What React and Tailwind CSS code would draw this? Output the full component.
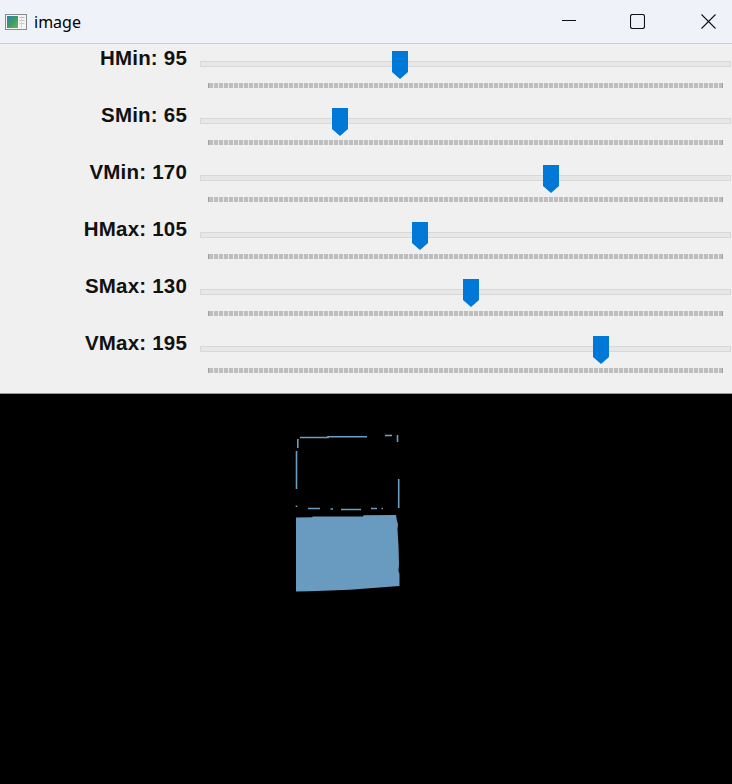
const sliders = [
  { label: 'HMin', value: 95 },
  { label: 'SMin', value: 65 },
  { label: 'VMin', value: 170 },
  { label: 'HMax', value: 105 },
  { label: 'SMax', value: 130 },
  { label: 'VMax', value: 195 },
];

function AppIcon() {
  return (
    <svg width="22" height="16" viewBox="0 0 22 16">
      <defs>
        <linearGradient id="pic" x1="0" y1="0" x2="1" y2="1">
          <stop offset="0" stopColor="#2f7fa8" />
          <stop offset="0.5" stopColor="#3c9a6a" />
          <stop offset="1" stopColor="#6cb84a" />
        </linearGradient>
      </defs>
      <rect x="0.5" y="0.5" width="21" height="15" fill="#f4f4f4" stroke="#8a8a8a" />
      <rect x="2" y="2" width="11" height="12" fill="url(#pic)" />
      <rect x="14.5" y="3" width="5" height="1" fill="#b8b8b8" />
      <rect x="14.5" y="6" width="5" height="1" fill="#c8c8c8" />
      <rect x="14.5" y="9" width="5" height="1" fill="#c8c8c8" />
      <rect x="16" y="2" width="1" height="12" fill="#d8d8d8" />
    </svg>
  );
}

function TitleBar() {
  return (
    <div className="flex h-[44px] items-center border-b border-[#c9ccd1] bg-[#eff3f9]">
      <div className="ml-[5px] mt-[1px]">
        <AppIcon />
      </div>
      <span className="ml-[7px] text-[16px] leading-none text-black" style={{ fontFamily: '"Noto Sans", "Open Sans", sans-serif' }}>
        image
      </span>
      <div className="ml-auto flex items-center pr-[16px]">
        <svg width="14" height="14" viewBox="0 0 14 14" className="mt-[-1px]">
          <path d="M0 6.5h14" stroke="#111" strokeWidth="1" />
        </svg>
        <svg width="15" height="15" viewBox="0 0 15 15" className="ml-[54px]">
          <rect x="0.5" y="0.5" width="14" height="14" rx="2" fill="none" stroke="#111" strokeWidth="1.1" />
        </svg>
        <svg width="15" height="15" viewBox="0 0 15 15" className="ml-[56px]">
          <path d="M0.5 0.5L14.5 14.5M14.5 0.5L0.5 14.5" stroke="#111" strokeWidth="1.1" />
        </svg>
      </div>
    </div>
  );
}

function Thumb({ value }) {
  const left = 1 + value * 2.012;
  return (
    <svg
      width="16"
      height="28"
      viewBox="0 0 16 28"
      className="absolute top-[7px]"
      style={{ left }}
    >
      <path d="M0 0H16V21L8 28L0 21Z" fill="#0078d7" />
    </svg>
  );
}

function SliderRow({ label, value }) {
  return (
    <div className="flex h-[57px]">
      <div
        className="w-[200px] pr-[13px] pt-[4px] text-right text-[20.5px] font-bold leading-[20px] tracking-[0.2px] text-[#111]"
        style={{ fontFamily: '"Liberation Sans", Arial, sans-serif' }}
      >
        {label}: {value}
      </div>
      <div className="relative flex-1">
        <div className="mt-[17px] h-[6px] w-[531px] border border-[#d8d8d8] bg-[#e7e7e7]" />
        <div className="ml-[8px] mt-[16px] flex h-[5px] w-[515px] items-stretch">
          <div className="w-[1px] bg-[#a0a0a0]" />
          <div className="flex-1 bg-[repeating-linear-gradient(90deg,#bebebe_0px,#bebebe_4px,#ebebeb_4px,#ebebeb_5px)]" />
          <div className="w-[1px] bg-[#a0a0a0]" />
        </div>
        <Thumb value={value} />
      </div>
    </div>
  );
}

function Mask() {
  return (
    <svg width="732" height="390" viewBox="0 393 732 390" className="block">
      <g stroke="#6a9ec2" strokeWidth="1.6" fill="none">
        <path d="M300 436.5H328V435.8H367" />
        <path d="M385 434.5H392" />
        <path d="M397.5 434V441" />
        <path d="M297.8 438V447" />
        <path d="M296.5 450V488" />
        <path d="M398.7 478V507" />
        <path d="M308 507.5H320M330.5 508H333M341 508.5H361M371 507.5H377M381.5 507.5H383" />
        <path d="M296.5 504.5V506" />
      </g>
      <path
        d="M296 516.5L312 516.3L313 515.6L363 515.4L363.5 514.3L396 514L397 520L398 523L397.5 528L398.5 545L399 563L398.5 570L399.5 573L399.5 585L373 587L350 588.8L310 590.2L296 590.5Z"
        fill="#689bbf"
      />
    </svg>
  );
}

export default function App() {
  return (
    <div className="h-[784px] w-[732px] overflow-hidden bg-black">
      <TitleBar />
      <div className="h-[349px] bg-[#f0f0f0]">
        {sliders.map((s) => (
          <SliderRow key={s.label} label={s.label} value={s.value} />
        ))}
      </div>
      <div className="h-[1px] bg-[#9a9a9a]" />
      <Mask />
    </div>
  );
}
